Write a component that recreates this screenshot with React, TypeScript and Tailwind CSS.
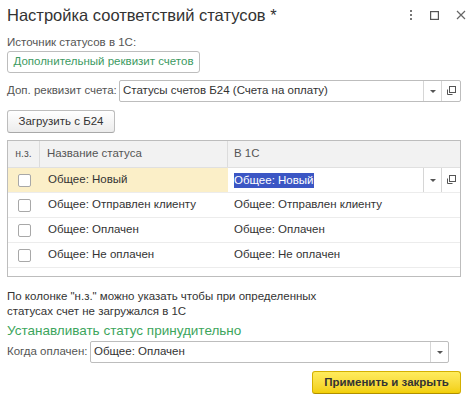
const rows = [
  { name: "Общее: Новый", value: "Общее: Новый", active: true },
  { name: "Общее: Отправлен клиенту", value: "Общее: Отправлен клиенту" },
  { name: "Общее: Оплачен", value: "Общее: Оплачен" },
  { name: "Общее: Не оплачен", value: "Общее: Не оплачен" },
];

function DropArrow() {
  return <span className="block w-0 h-0 border-l-[3px] border-r-[3px] border-t-[3px] border-l-transparent border-r-transparent border-t-[#555]" />;
}

function OpenIcon() {
  return (
    <svg width="10" height="10" viewBox="0 0 10 10" fill="none" stroke="#555" strokeWidth="1">
      <rect x="3.5" y="0.5" width="6" height="6" />
      <path d="M1.5 3.5 V8.5 H6.5" />
    </svg>
  );
}

function Checkbox() {
  return <span className="block w-[13px] h-[13px] rounded-[2px] border border-[#a8a8a8] bg-white" />;
}

export default function App() {
  return (
    <div className="w-[474px] h-[403px] bg-white pl-[7px] pr-[13px] font-['Liberation_Sans',Arial,sans-serif] text-[11.5px] text-[#333] whitespace-nowrap overflow-hidden">
      {/* title */}
      <div className="flex items-center h-[29px] pt-[1px]">
        <h1 className="text-[16.5px] text-[#333] leading-none">Настройка соответствий статусов *</h1>
        <div className="ml-auto flex items-center gap-[17px] -mr-[5px]">
          <svg width="4" height="12" viewBox="0 0 4 12" fill="#777">
            <rect x="1" y="1" width="2" height="2" />
            <rect x="1" y="5" width="2" height="2" />
            <rect x="1" y="9" width="2" height="2" />
          </svg>
          <svg width="9" height="9" viewBox="0 0 9 9" fill="none" stroke="#555" strokeWidth="1.2">
            <rect x="0.6" y="0.6" width="7.8" height="7.8" />
          </svg>
          <svg width="10" height="10" viewBox="0 0 10 10" fill="none" stroke="#666" strokeWidth="1.2">
            <path d="M1 1 L9 9 M9 1 L1 9" />
          </svg>
        </div>
      </div>

      <div className="mt-[6px] text-[#555] leading-[15px]">Источник статусов в 1С:</div>
      <button className="mt-[1px] h-[22px] w-[193px] rounded-[3px] border border-[#bdbdbd] bg-white text-[#3c9a5f] leading-none">
        Дополнительный реквизит счетов
      </button>

      <div className="mt-[7px] flex items-center">
        <span className="text-[#555] w-[112px]">Доп. реквизит счета:</span>
        <div className="flex h-[22px] w-[342px] rounded-[2px] border border-[#bdbdbd] bg-white">
          <span className="flex-1 flex items-center pl-[3px] text-[#333]">Статусы счетов Б24 (Счета на оплату)</span>
          <span className="w-[18px] flex items-center justify-center border-l border-[#d6d6d6]"><DropArrow /></span>
          <span className="w-[19px] flex items-center justify-center border-l border-[#d6d6d6]"><OpenIcon /></span>
        </div>
      </div>

      <button className="mt-[8px] h-[23px] w-[108px] rounded-[3px] border border-[#bdbdbd] border-b-[#a8a8a8] bg-gradient-to-b from-white to-[#ececec] text-[#333] leading-none">
        Загрузить с Б24
      </button>

      {/* table */}
      <div className="mt-[7px] w-[454px] h-[137px] border border-[#bdbdbd] bg-white">
        <div className="flex h-[27px] bg-[#f2f2f2] text-[#555] border-b border-[#e0e0e0]">
          <div className="w-[32px] flex items-center justify-center text-[10.5px] border-r border-[#dcdcdc]">н.з.</div>
          <div className="w-[188px] flex items-center pl-[7px] border-r border-[#dcdcdc]">Название статуса</div>
          <div className="flex-1 flex items-center pl-[6px]">В 1С</div>
        </div>
        {rows.map((r) => (
          <div key={r.name} className="flex h-[25px] border-b border-[#ececec]">
            <div className={`w-[32px] flex items-center justify-center ${r.active ? "bg-[#fbefc8]" : ""}`}>
              <Checkbox />
            </div>
            <div className={`w-[188px] flex items-center pl-[8px] ${r.active ? "bg-[#fbefc8]" : ""}`}>{r.name}</div>
            {r.active ? (
              <div className="flex-1 flex">
                <div className="flex-1 flex items-center pl-[6px]">
                  <span className="bg-[#3b56c4] text-white leading-[15px]">{r.value}</span>
                </div>
                <span className="w-[18px] flex items-center justify-center border-l border-[#d6d6d6]"><DropArrow /></span>
                <span className="w-[19px] flex items-center justify-center border-l border-[#d6d6d6]"><OpenIcon /></span>
              </div>
            ) : (
              <div className="flex-1 flex items-center pl-[6px]">{r.value}</div>
            )}
          </div>
        ))}
      </div>

      <p className="mt-[12px] leading-[15px] text-[#333]">
        По колонке "н.з." можно указать чтобы при определенных
        <br />
        статусах счет не загружался в 1С
      </p>

      <div className="mt-[2px] text-[13.5px] text-[#3ca55c] leading-[20px]">Устанавливать статус принудительно</div>

      <div className="flex items-center">
        <span className="text-[#555] w-[83px]">Когда оплачен:</span>
        <div className="flex h-[22px] w-[359px] rounded-[2px] border border-[#bdbdbd] bg-white">
          <span className="flex-1 flex items-center pl-[3px] text-[#333]">Общее: Оплачен</span>
          <span className="w-[18px] flex items-center justify-center border-l border-[#d6d6d6]"><DropArrow /></span>
        </div>
      </div>

      <div className="mt-[8px] flex justify-end">
        <button className="h-[23px] w-[149px] rounded-[3px] border border-[#d4b000] border-b-[#b08f00] bg-gradient-to-b from-[#ffec5c] to-[#f2cf00] text-[#333] font-bold leading-none">
          Применить и закрыть
        </button>
      </div>
    </div>
  );
}
